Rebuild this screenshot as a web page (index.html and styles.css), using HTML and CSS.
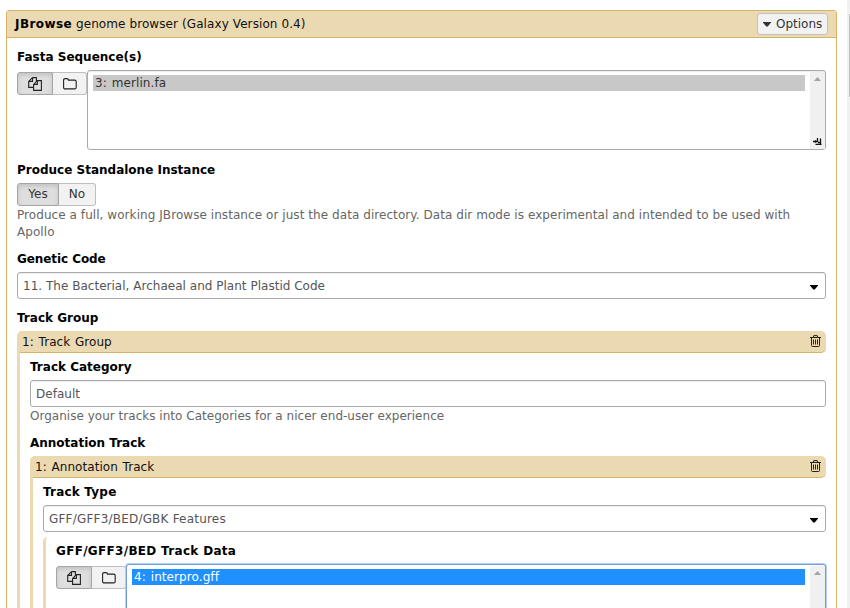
FILE: index.html
```html
<!DOCTYPE html>
<html lang="en">
<head>
<meta charset="utf-8">
<title>JBrowse genome browser</title>
<link rel="stylesheet" href="styles.css">
</head>
<body>
<svg class="defs" width="0" height="0">
  <symbol id="files" viewBox="0 0 14 14"><path d="M4.5 .6H8.4V4M4.5 .6V4.4H.7M4.5 .6.7 4.4V10.4H5.4M9.4 3.6H13.4V13.4H5.6V7.4ZM9.4 3.6V7.4H5.6M8.4 4V4.6" /></symbol>
  <symbol id="folder" viewBox="0 0 14 12"><path d="M.6 2.1Q.6 .6 2.1 .6H4Q5.4 .6 5.4 2.1H11.6Q13.2 2.1 13.2 3.6V9.4Q13.2 10.9 11.7 10.9H2.1Q.6 10.9 .6 9.4Z" /></symbol>
  <symbol id="trash" viewBox="0 0 11 12"><path d="M0 2.5H11M3.3 2.5 3.8 .6H7.2L7.7 2.5M1.5 2.5V10.5Q1.5 11.5 2.5 11.5H8.5Q9.5 11.5 9.5 10.5V2.5M3.5 4.5V9.5M5.5 4.5V9.5M7.5 4.5V9.5" /></symbol>
</svg>
<div class="page">
  <main class="panel">
    <header class="panel-head">
      <div class="title"><b>JBrowse</b> genome browser (Galaxy Version 0.4)</div>
      <button class="options"><i class="caret"></i>Options</button>
    </header>
    <div class="panel-body">
      <section class="row data-row">
        <div class="label">Fasta Sequence(s)</div>
        <div class="data">
          <div class="group"><button class="btn active wide"><svg class="i-files"><use href="#files"/></svg></button><button class="btn last"><svg class="i-folder"><use href="#folder"/></svg></button></div>
          <div class="list"><div class="items"><div class="item">3: merlin.fa</div></div>
            <div class="bar"><i class="up"></i><svg class="grip" viewBox="0 0 9 8"><path d="M0 4.5H5M4.5 1V5M2.5 3.2V5.8"/><path d="M2.5 7.4H8.5M7.5 1.5V8M5 5.5H7"/></svg></div></div>
        </div>
      </section>
      <section class="row">
        <div class="label">Produce Standalone Instance</div>
        <div class="group"><button class="btn active yes">Yes</button><button class="btn last no">No</button></div>
        <div class="help long">Produce a full, working JBrowse instance or just the data directory. Data dir mode is experimental and intended to be used with Apollo</div>
      </section>
      <section class="row">
        <div class="label code-label">Genetic Code</div>
        <div class="field">11. The Bacterial, Archaeal and Plant Plastid Code<i class="caret"></i></div>
      </section>
      <section class="row">
        <div class="label">Track Group</div>
        <div class="repeat">
          <div class="repeat-head">1: Track Group<svg class="i-trash"><use href="#trash"/></svg></div>
          <div class="row">
            <div class="label">Track Category</div>
            <div class="field">Default</div>
            <div class="help">Organise your tracks into Categories for a nicer end-user experience</div>
          </div>
          <div class="row">
            <div class="label">Annotation Track</div>
            <div class="repeat">
              <div class="repeat-head">1: Annotation Track<svg class="i-trash"><use href="#trash"/></svg></div>
              <div class="row">
                <div class="label type-label">Track Type</div>
                <div class="field type">GFF/GFF3/BED/GBK Features<i class="caret"></i></div>
              </div>
              <div class="nested">
                <div class="label data-label">GFF/GFF3/BED Track Data</div>
                <div class="data">
                  <div class="group"><button class="btn active wide"><svg class="i-files"><use href="#files"/></svg></button><button class="btn last"><svg class="i-folder"><use href="#folder"/></svg></button></div>
                  <div class="list focus"><div class="items"><div class="item">4: interpro.gff</div></div><div class="bar"><i class="up"></i></div></div>
                </div>
              </div>
            </div>
          </div>
        </div>
      </section>
    </div>
  </main>
  <div class="page-bar"><div class="thumb"></div></div>
</div>
</body>
</html>
```
FILE: styles.css
```css
* { box-sizing: border-box; }
body {
  margin: 0;
  overflow: hidden;
  background: #fff;
  color: #111;
  font: 12px/17px "DejaVu Sans", sans-serif;
}
.defs { display: block; width: 0; height: 0; }
.page { display: flex; justify-content: space-between; height: 608px; overflow: hidden; }
.panel {
  width: 831px;
  height: 700px;
  margin: 10px 0 0 6px;
  border: 1px solid #d8b365;
  border-radius: 3px 3px 0 0;
}
.panel-head {
  display: flex;
  justify-content: space-between;
  align-items: center;
  height: 27px;
  padding: 0 8px;
  background: #ebd9b2;
  border-bottom: 1px solid #d8b365;
}
.title { letter-spacing: .09px; }
b { color: #000; letter-spacing: .42px; }
button { font: inherit; color: #333; margin: 0; }
.options {
  display: flex;
  align-items: center;
  width: 71px;
  height: 22px;
  padding: 0 0 0 5px;
  background: #f2f2f2;
  border: 1px solid #bfbfbf;
  border-radius: 3px;
}
.caret {
  width: 8px;
  height: 5px;
  background: currentColor;
  clip-path: polygon(0 0, 100% 0, 100% 20%, 60% 100%, 40% 100%, 0 20%);
}
.options .caret { margin-right: 5px; }
.panel-body { padding: 0 10px; }
.row { padding-top: 10px; }
.data-row { padding-bottom: 1px; }
.label { height: 17px; margin-bottom: 5px; line-height: 19px; font-weight: bold; color: #000; }
.label.code-label { letter-spacing: -.08px; }
.label.type-label { letter-spacing: .2px; }
.label.data-label { letter-spacing: .31px; }
.data { display: flex; align-items: flex-start; }
.data .group { margin-top: 2px; }
.group { display: flex; }
.btn {
  display: flex;
  align-items: center;
  justify-content: center;
  width: 34px;
  height: 23px;
  padding: 0 0 1px;
  background: #f2f2f2;
  border: 1px solid #bfbfbf;
  border-left: 0;
  border-radius: 0 3px 3px 0;
}
.btn.active {
  background: #dedede;
  border: 1px solid #a6a6a6;
  border-radius: 3px 0 0 3px;
  box-shadow: inset 0 2px 4px rgba(0, 0, 0, .13);
}
.wide { width: 36px; }
.btn.yes { width: 42px; }
.btn.no { width: 37px; }
svg { fill: none; stroke: #222; stroke-width: 1.1; }
.i-files { width: 14px; height: 14px; margin-top: 1px; }
.i-folder { width: 14px; height: 12px; margin-top: 1px; }
.i-trash { width: 11px; height: 12px; margin-top: -2px; stroke-width: 1; }
.list {
  display: flex;
  flex: 1;
  height: 80px;
  padding-left: 5px;
  border: 1px solid #aaa;
  border-radius: 3px;
  background: #fff;
  box-shadow: inset 0 1px 1px rgba(0, 0, 0, .075);
}
.items { flex: 1; padding: 4px 5px 0 0; }
.item { height: 16px; padding-left: 2px; line-height: 16px; letter-spacing: .08px; word-spacing: 1px; background: #c8c8c8; color: #333; }
.bar {
  display: flex;
  flex-direction: column;
  justify-content: space-between;
  width: 15px;
  margin-top: 1px;
  padding: 5px 3px 4px 3px;
  background: #f0f0f0;
}
.up { width: 7px; height: 4px; margin-left: 1px; background: #a3a3a3; clip-path: polygon(50% 0, 100% 100%, 0 100%); }
.grip { width: 9px; height: 8px; stroke: #111; stroke-width: 1.3; }
.focus { border-color: #739bdf; box-shadow: 0 0 0 1px #b5cff8; }
.focus .item { background: #1e90ff; color: #fff; }
.help { padding-top: 1px; margin-bottom: -1px; color: #666; letter-spacing: .02px; }
.help.long { padding-right: 20px; letter-spacing: .062px; }
.field {
  display: flex;
  align-items: center;
  justify-content: space-between;
  height: 27px;
  padding: 1px 7px 0 5px;
  border: 1px solid #aaa;
  border-radius: 3px;
  color: #555;
  letter-spacing: .02px;
  box-shadow: inset 0 1px 1px rgba(0, 0, 0, .075);
}
.field.type { letter-spacing: .2px; }
.field .caret { color: #000; margin-top: 2px; }
.repeat {
  padding-left: 10px;
  border-left: 3px solid #ebd9b2;
  border-radius: 5px 0 0 0;
}
.repeat-head {
  display: flex;
  align-items: center;
  justify-content: space-between;
  height: 22px;
  margin-left: -10px;
  padding: 1px 5px 0 2px;
  background: #ebd9b2;
  border-bottom: 1px solid #d8b365;
  border-radius: 0 5px 5px 0;
  letter-spacing: .05px;
  word-spacing: .9px;
}
.repeat-head + .row { padding-top: 5px; }
.nested {
  margin-top: 5px;
  padding: 5px 0 0 10px;
  border-left: 3px solid #ebd9b2;
  border-radius: 5px 0 0 0;
}
.page-bar { width: 3px; padding: 14px 0 0 2px; background: #f0f0f0; }
.thumb { height: 83px; background: #c1c1c1; }
```
